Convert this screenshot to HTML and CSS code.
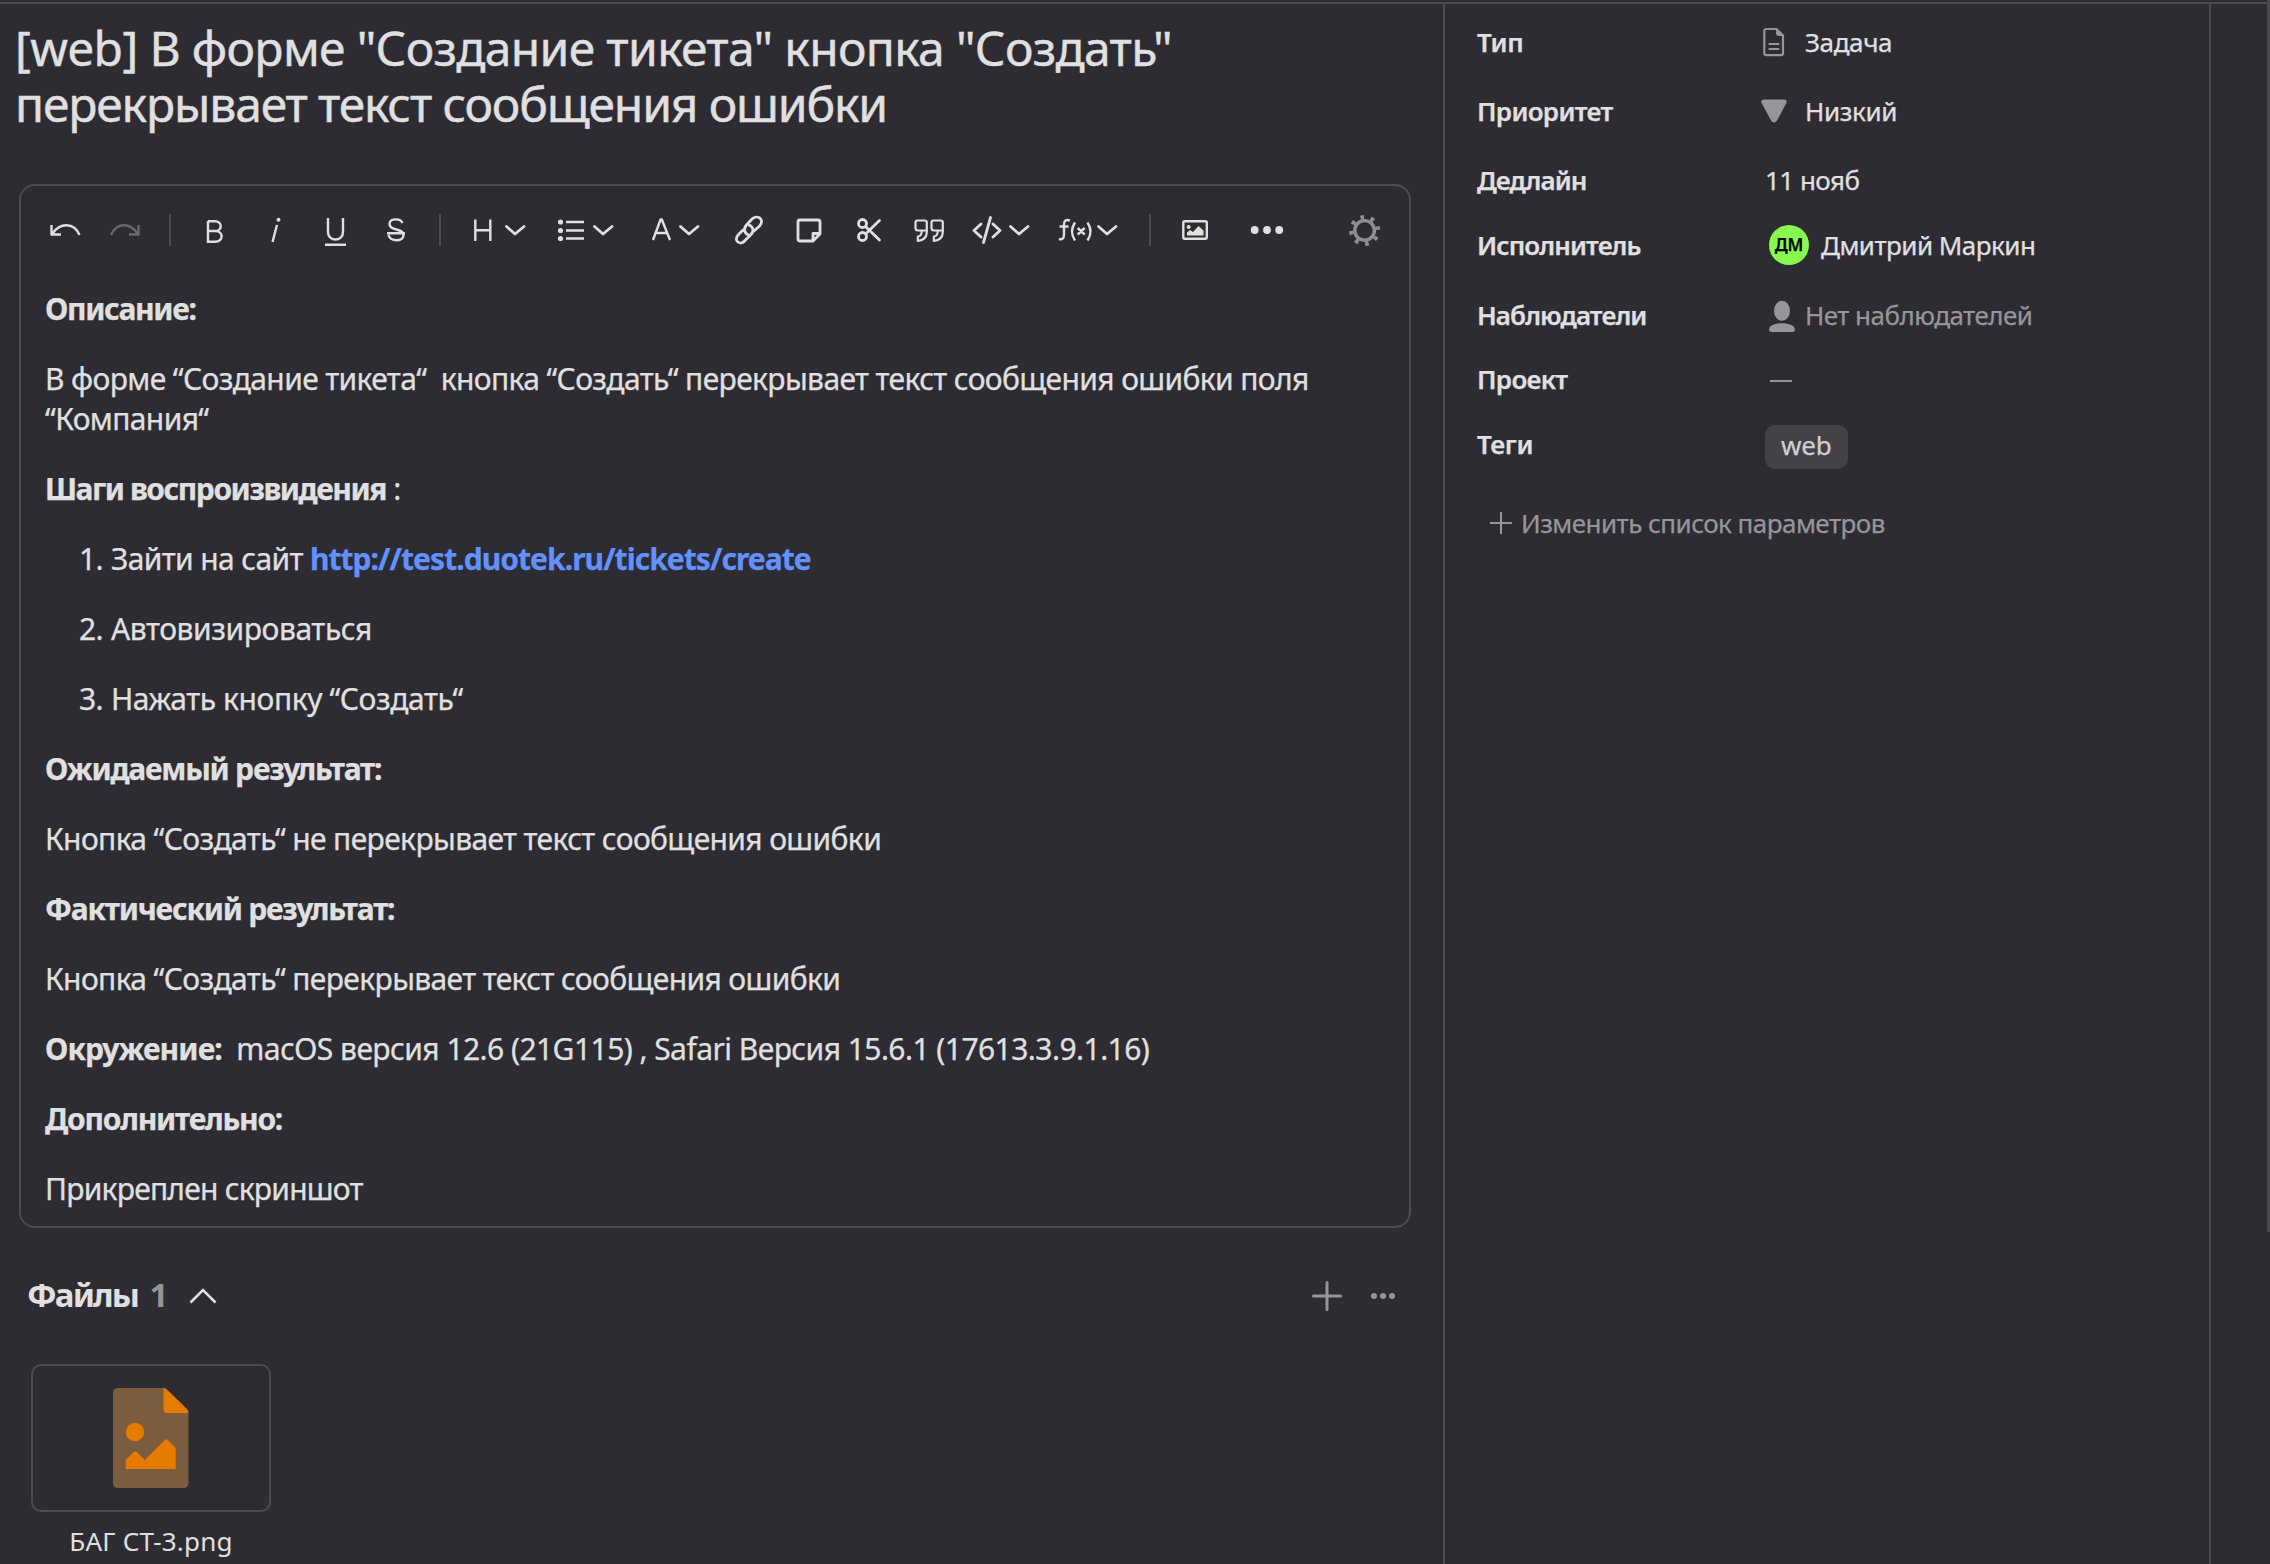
FILE: index.html
```
<!DOCTYPE html>
<html lang="ru">
<head>
<meta charset="utf-8">
<title>Задача</title>
<link rel="stylesheet" href="styles.css">
</head>
<body>
<main class="page">
  <section class="task">
    <h1 class="title"><span class="t1">[web] В форме "Создание тикета" кнопка "Создать"</span><br><span class="t2">перекрывает текст сообщения ошибки</span></h1>
    <div class="editor">
      <div class="toolbar">
        <svg class="icons" width="1388" height="90" viewBox="21 186 1388 90">
          <g class="line">
            <path d="M51.500 225v9.500H61M52.500 233.500C60 222.500 74 222 79.500 235"/>
            <path class="off" d="M138.500 225v9.500H129M137.500 233.500C130 222.500 117 222 111 235"/>
            <path d="M208 221v22M208 221.300h7c7.600 0 7.600 9.700 0 9.700h-7M215 231c8.800 0 8.800 10.700 0 10.700h-7"/>
            <path d="M277 225l-4.500 17"/>
            <path d="M328 218v14c0 10 15 10 15 0v-14M325 244.800h21"/>
            <path d="M402.500 223c-2-5-13-5-13 1 0 7 14 4 14 11 0 7-13 7-15 0M387 233.200h18"/>
            <path d="M475.300 219.500v21.500M490.300 219.500v21.500M475 230.300h15"/>
            <path d="M566 222h18M566 230.500h18M566 238.500h18"/>
            <path d="M653 240l7.600-20.500h1.200L670 240M656 233h11.500"/>
            <path class="w3" d="M506.500 226.500l8.500 7.500 9-7.500M594.500 226.500l8.500 7.500 9-7.500M680.500 226.500l8.500 7.500 9-7.500"/>
            <path class="w3" d="M743 230L738.500 234.500C732.500 241 740.500 246 745 240.500L751 234.500C754.500 231 753 226.500 749 225M754 231L759.500 226C765.500 219.500 757 214 752 219L746.500 225C743 229 744.500 233.500 748.500 235"/>
            <path class="w3" d="M800 220h18q2 0 2 2v12l-7 7h-13q-2 0-2-2v-17q0-2 2-2zM813 240v-6.500h6.500"/>
            <g class="w3"><circle cx="862.500" cy="223.500" r="4"/><circle cx="862.500" cy="236.500" r="4"/><path d="M866 227l13.500 13M866 233.500l13.500-13"/></g>
            <path class="w2" d="M926.500 230.500h-8.500q-2.500 0-2.500-2.500v-5.500q0-2 2-2h7q2.300 0 2.300 2v9.500q0 8-9 9v-4.500q3.500 0 4-5M942.500 230.500h-8.500q-2.500 0-2.500-2.500v-5.500q0-2 2-2h7q2.300 0 2.300 2v9.500q0 8-9 9v-4.500q3.500 0 4-5"/>
            <path class="w3" d="M981 224l-7 6.500 7 6.500M990.500 217.500l-7 25M993 224l7 6.500-7 6.500M1010.500 226.500l8.500 7.500 9-7.500"/>
            <path d="M1070 220.500c-4.500-1.500-6 .5-6 4v10c0 4-2 5.500-5 4.500M1059.500 226.500h9M1075 222.500c-4 6-4 12 0 18M1087.500 222.500c4 6 4 12 0 18M1077.700 228l7 6.500M1084.700 228l-7 6.500"/>
            <path class="w3" d="M1098.500 226.500l8.500 7.500 9-7.500"/>
            <rect x="1183.300" y="221.300" width="23.500" height="17.500" rx="1.500"/>
          </g>
          <g class="fill">
            <circle cx="278.500" cy="219.800" r="2"/>
            <circle cx="560.500" cy="222" r="2.600"/><circle cx="560.500" cy="230.500" r="2.600"/><circle cx="560.500" cy="238.500" r="2.600"/>
            <circle cx="1188.700" cy="227" r="2"/><path d="M1187 235.500v-3l3-2.500 3 2 5.500-6 5 4.500v5z"/>
            <circle cx="1254.700" cy="230" r="3.900"/><circle cx="1267" cy="230" r="3.900"/><circle cx="1279.200" cy="230" r="3.900"/>
          </g>
          <path class="sep" d="M170 214v32M440 214v32M1150 214v32"/>
          <g class="gear" transform="rotate(-10 1364.600 230.400)"><circle cx="1364.600" cy="230.400" r="9.800"/><circle class="teeth" cx="1364.600" cy="230.400" r="13.300" pathLength="80"/></g>
        </svg>
      </div>
      <div class="content">
        <p><b class="a1">Описание:</b></p>
        <p><span>В форме “Создание тикета“&nbsp; кнопка “Создать“ перекрывает текст сообщения ошибки поля</span><br><span>“Компания“</span></p>
        <p><b class="a4">Шаги воспроизвидения</b> :</p>
        <ol>
          <li><span class="n">1.</span><span>Зайти на сайт</span> <a>http://test.duotek.ru/tickets/create</a></li>
          <li><span class="n">2.</span><span class="a7">Автовизироваться</span></li>
          <li><span class="n">3.</span><span class="a7">Нажать кнопку “Создать“</span></li>
        </ol>
        <p><b>Ожидаемый результат:</b></p>
        <p>Кнопка “Создать“ не перекрывает текст сообщения ошибки</p>
        <p><b>Фактический результат:</b></p>
        <p>Кнопка “Создать“ перекрывает текст сообщения ошибки</p>
        <p><b class="a13">Окружение:</b><span class="a14">&nbsp; macOS версия 12.6 (21G115) , Safari Версия 15.6.1 (17613.3.9.1.16)</span></p>
        <p><b>Дополнительно:</b></p>
        <p class="a16">Прикреплен скриншот</p>
      </div>
    </div>
    <div class="files">
      <h2>Файлы <span>1</span></h2>
      <svg class="up" width="30" height="20" viewBox="0 0 30 20"><path d="M2.500 16.500L15 4l12.500 12.500"/></svg>
      <svg class="acts" width="90" height="34" viewBox="1310 1279 90 34"><path d="M1313.500 1296h27M1327 1282.500v27"/><circle cx="1374" cy="1296" r="3"/><circle cx="1383" cy="1296" r="3"/><circle cx="1392" cy="1296" r="3"/></svg>
    </div>
    <figure class="file">
      <div class="thumb">
        <svg width="76" height="100" viewBox="0 0 76 100"><path fill="#7b5c3e" d="M5 0h46l24.500 25v70q0 5-5 5H5q-5 0-5-5V5q0-5 5-5z"/><path fill="#e77b00" d="M50.500 0q2 0 4 2L73.500 20.500q2 2 2 4.500H54q-3.500 0-3.500-3.500z"/><circle cx="22" cy="44" r="9.200" fill="#e77b00"/><path fill="#e77b00" d="M12.700 81v-9l8-8q1.500-1 3 0l8 8 20-20q1.500-1.500 3 0l8 8v21z"/></svg>
      </div>
      <figcaption>БАГ СТ-3.png</figcaption>
    </figure>
  </section>
  <aside class="params">
    <dl>
      <div class="row r1"><dt>Тип</dt><dd><svg class="doc" width="40" height="30" viewBox="0 0 40 30"><path d="M6.500 2h10L23 8.500V26q0 2.200-2 2.200H6.500q-2.200 0-2.200-2.200V4q0-2 2.200-2z" fill="none" stroke="#969698" stroke-width="2.200"/><path d="M16.500 2v4.500q0 2 2 2H23z" fill="#969698" stroke="#969698"/><path d="M9.500 17h9M9.500 22h9" stroke="#969698" stroke-width="2.200" stroke-linecap="round"/></svg><span>Задача</span></dd></div>
      <div class="row r2"><dt>Приоритет</dt><dd><svg class="low" width="40" height="30" viewBox="0 0 40 30"><path d="M3 3.500h20q3.500 0 2.500 3.200L16 24.500q-3 4-6 0L.5 6.700Q-.5 3.500 3 3.500z" fill="#969698"/></svg><span>Низкий</span></dd></div>
      <div class="row r3"><dt>Дедлайн</dt><dd>11 нояб</dd></div>
      <div class="row r4"><dt>Исполнитель</dt><dd><span class="avatar">ДМ</span><span>Дмитрий Маркин</span></dd></div>
      <div class="row r5"><dt>Наблюдатели</dt><dd class="mute"><svg width="40" height="34" viewBox="0 -3 40 34"><ellipse cx="17" cy="9.700" rx="8" ry="10" fill="#969698"/><path d="M4 28.500c0-8.500 26-8.500 26 0q0 2.500-3 2.500h-20q-3 0-3-2.500z" fill="#969698"/></svg><span>Нет наблюдателей</span></dd></div>
      <div class="row r6"><dt>Проект</dt><dd><i class="dash"></i></dd></div>
      <div class="row r7"><dt>Теги</dt><dd><span class="tag">web</span></dd></div>
    </dl>
    <div class="change"><svg width="24" height="24" viewBox="0 0 24 24"><path d="M1 12h22M12 1v22"/></svg><span>Изменить список параметров</span></div>
  </aside>
  <div class="rail"><div class="scroll"></div></div>
</main>
</body>
</html>
```
FILE: styles.css
```
* { box-sizing: border-box; }
body { margin: 0; background: #2d2c33; color: #e0e0e0; font: 30px/40px "Noto Sans", sans-serif; letter-spacing: -.63px; white-space: nowrap; }
h1, h2, p, ol, dl, dd, figure { margin: 0; padding: 0; font-weight: 400; }
svg { display: block; flex: none; }
.page { display: flex; height: 1564px; padding-top: 4px; background: linear-gradient(#4d4c52, #4d4c52) 0 2px / 100% 2px no-repeat; overflow: hidden; }
.task { width: 1445px; border-right: 2px solid #4d4c52; padding: 16px 32px 0 19px; }
.title { font-size: 48px; line-height: 56px; margin-left: -4px; height: 164px; -webkit-text-stroke: .4px #e0e0e0; }
.t1 { letter-spacing: -.66px; }
.t2 { letter-spacing: -1.15px; }
.editor { width: 1392px; height: 1044px; border: 2px solid #4d4c52; border-radius: 16px; }
.toolbar { height: 90px; }
.line { fill: none; stroke: #e0e0e0; stroke-width: 2.4; stroke-linejoin: round; }
.line .w2 { stroke-width: 2.2; }
.line .w3 { stroke-width: 2.8; stroke-linecap: round; }
.line .off { stroke: #69686d; }
.fill { fill: #e0e0e0; }
.sep { stroke: #4d4c52; stroke-width: 2; }
.gear { fill: none; stroke: #8f8f92; stroke-width: 3.4; }
.gear .teeth { stroke-width: 4.4; stroke-dasharray: 3.6 6.4; stroke-dashoffset: 1.8; }
.content { padding: 13px 24px; display: flex; flex-direction: column; gap: 30px; -webkit-text-stroke: .25px; }
.content b { letter-spacing: -1.22px; }
.content b.a1 { letter-spacing: -1.33px; }
.content b.a4 { letter-spacing: -1.45px; }
.content b.a13 { letter-spacing: -.9px; }
.a7 { letter-spacing: -.42px; }
.a14 { letter-spacing: -.55px; }
.a16 { letter-spacing: -.77px; }
ol { list-style: none; display: flex; flex-direction: column; gap: 30px; padding-left: 34px; }
.n { display: inline-block; width: 32px; }
a { color: #6292ff; font-weight: 700; letter-spacing: -.96px; }
.files { display: flex; align-items: center; height: 56px; margin-top: 40px; padding-left: 8px; }
h2 { width: 161px; margin-top: -2px; font-size: 33px; font-weight: 700; letter-spacing: -1.9px; }
h2 span { color: #969698; margin-left: 5px; }
.up { fill: none; stroke: #e0e0e0; stroke-width: 2.6; }
.acts { margin-left: auto; fill: #969698; stroke: none; margin-right: 11px; }
.acts path { stroke: #969698; stroke-width: 3; stroke-linecap: round; }
.file { width: 240px; margin: 40px 0 0 12px; text-align: center; }
.thumb { height: 148px; border: 2px solid #4d4c52; border-radius: 10px; display: flex; justify-content: center; padding-top: 22px; }
figcaption { font-size: 26px; margin-top: 9px; letter-spacing: .2px; }
.params { width: 766px; border-right: 2px solid #4d4c52; padding: 3px 0 0 32px; font-size: 26px; letter-spacing: -.53px; -webkit-text-stroke: .25px; }
.row { display: flex; align-items: center; height: 69px; }
.r4 { height: 61px; }
.r5 { height: 80px; }
.r6 { height: 48px; }
.r7 { height: 82px; }
dt { width: 288px; font-weight: 600; letter-spacing: -.9px; }
.r1 dt, .r7 dt { letter-spacing: -.4px; }
.r2 dt, .r6 dt { letter-spacing: -.7px; }
.r1 dd, .r2 dd { letter-spacing: -.38px; }
dd { display: flex; align-items: center; }
.doc { margin: 0 5px 0 -5px; }
.low { margin: 0 4px 0 -4px; }
.mute, .change { color: #969698; }
.avatar { width: 40px; height: 40px; border-radius: 50%; background: #88f94f; color: #000; font-size: 17px; font-weight: 600; letter-spacing: 0; text-align: center; margin: 0 12px 0 4px; }
.dash { width: 22px; height: 2px; margin: 3px 0 0 5px; background: #969698; }
.tag { background: #434246; border-radius: 10px; height: 44px; margin-top: 5px; line-height: 40px; padding: 0 16px; color: #cfcfd0; letter-spacing: -.2px; }
.change { display: flex; align-items: center; gap: 8px; margin-top: 18px; padding-left: 12px; }
.change path { stroke: #969698; stroke-width: 2; }
.rail { flex: 1; display: flex; justify-content: flex-end; }
.scroll { width: 3px; height: 1232px; margin-top: -4px; background: #4a4951; }
```
